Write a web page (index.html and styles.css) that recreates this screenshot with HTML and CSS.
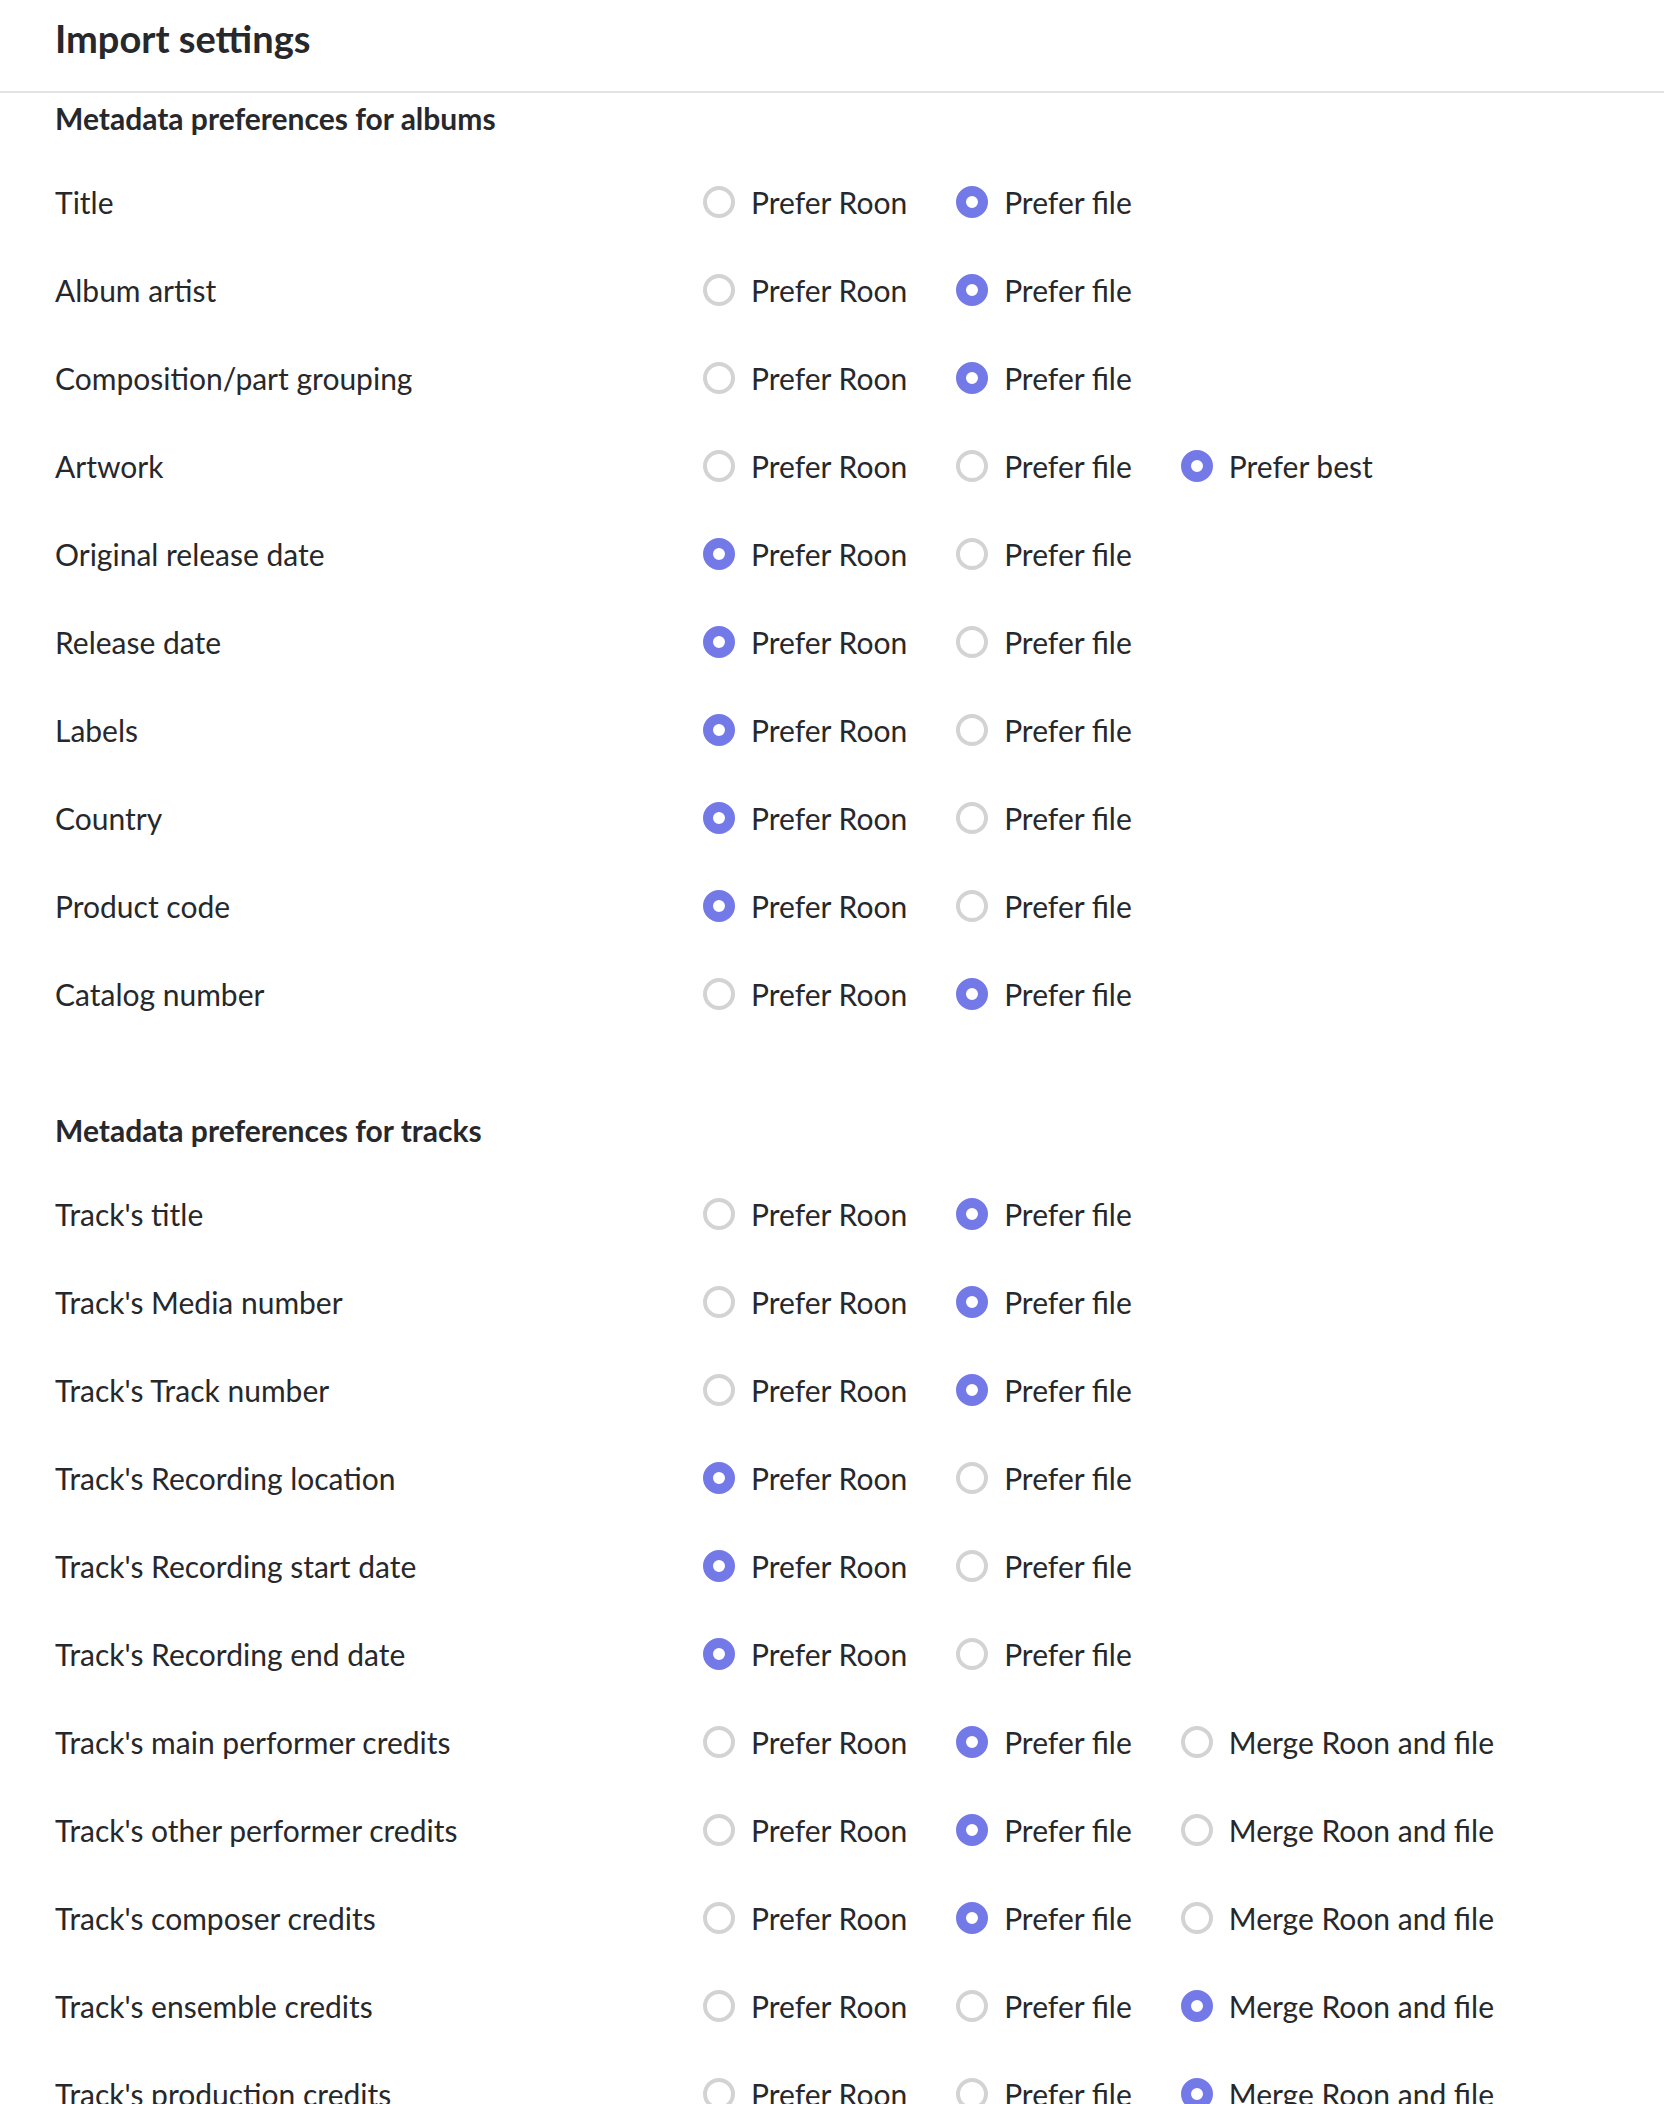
FILE: index.html
```html
<!DOCTYPE html>
<html lang="en">
<head>
  <meta charset="UTF-8">
  <title>Import settings</title>
  <link rel="stylesheet" href="styles.css">
</head>
<body>
  <header class="page-header">
    <h1>Import settings</h1>
  </header>

  <section class="prefs">
    <h2>Metadata preferences for albums</h2>

    <div class="row">
      <span class="row-label">Title</span>
      <div class="options">
        <label class="opt"><input type="radio" name="title"><span>Prefer Roon</span></label>
        <label class="opt"><input type="radio" name="title" checked><span>Prefer file</span></label>
      </div>
    </div>
    <div class="row">
      <span class="row-label">Album artist</span>
      <div class="options">
        <label class="opt"><input type="radio" name="album_artist"><span>Prefer Roon</span></label>
        <label class="opt"><input type="radio" name="album_artist" checked><span>Prefer file</span></label>
      </div>
    </div>
    <div class="row">
      <span class="row-label">Composition/part grouping</span>
      <div class="options">
        <label class="opt"><input type="radio" name="grouping"><span>Prefer Roon</span></label>
        <label class="opt"><input type="radio" name="grouping" checked><span>Prefer file</span></label>
      </div>
    </div>
    <div class="row">
      <span class="row-label">Artwork</span>
      <div class="options">
        <label class="opt"><input type="radio" name="artwork"><span>Prefer Roon</span></label>
        <label class="opt"><input type="radio" name="artwork"><span>Prefer file</span></label>
        <label class="opt"><input type="radio" name="artwork" checked><span>Prefer best</span></label>
      </div>
    </div>
    <div class="row">
      <span class="row-label">Original release date</span>
      <div class="options">
        <label class="opt"><input type="radio" name="orig_date" checked><span>Prefer Roon</span></label>
        <label class="opt"><input type="radio" name="orig_date"><span>Prefer file</span></label>
      </div>
    </div>
    <div class="row">
      <span class="row-label">Release date</span>
      <div class="options">
        <label class="opt"><input type="radio" name="release_date" checked><span>Prefer Roon</span></label>
        <label class="opt"><input type="radio" name="release_date"><span>Prefer file</span></label>
      </div>
    </div>
    <div class="row">
      <span class="row-label">Labels</span>
      <div class="options">
        <label class="opt"><input type="radio" name="labels" checked><span>Prefer Roon</span></label>
        <label class="opt"><input type="radio" name="labels"><span>Prefer file</span></label>
      </div>
    </div>
    <div class="row">
      <span class="row-label">Country</span>
      <div class="options">
        <label class="opt"><input type="radio" name="country" checked><span>Prefer Roon</span></label>
        <label class="opt"><input type="radio" name="country"><span>Prefer file</span></label>
      </div>
    </div>
    <div class="row">
      <span class="row-label">Product code</span>
      <div class="options">
        <label class="opt"><input type="radio" name="product_code" checked><span>Prefer Roon</span></label>
        <label class="opt"><input type="radio" name="product_code"><span>Prefer file</span></label>
      </div>
    </div>
    <div class="row">
      <span class="row-label">Catalog number</span>
      <div class="options">
        <label class="opt"><input type="radio" name="catalog"><span>Prefer Roon</span></label>
        <label class="opt"><input type="radio" name="catalog" checked><span>Prefer file</span></label>
      </div>
    </div>
  </section>

  <section class="prefs">
    <h2>Metadata preferences for tracks</h2>

    <div class="row">
      <span class="row-label">Track's title</span>
      <div class="options">
        <label class="opt"><input type="radio" name="t_title"><span>Prefer Roon</span></label>
        <label class="opt"><input type="radio" name="t_title" checked><span>Prefer file</span></label>
      </div>
    </div>
    <div class="row">
      <span class="row-label">Track's Media number</span>
      <div class="options">
        <label class="opt"><input type="radio" name="t_media"><span>Prefer Roon</span></label>
        <label class="opt"><input type="radio" name="t_media" checked><span>Prefer file</span></label>
      </div>
    </div>
    <div class="row">
      <span class="row-label">Track's Track number</span>
      <div class="options">
        <label class="opt"><input type="radio" name="t_number"><span>Prefer Roon</span></label>
        <label class="opt"><input type="radio" name="t_number" checked><span>Prefer file</span></label>
      </div>
    </div>
    <div class="row">
      <span class="row-label">Track's Recording location</span>
      <div class="options">
        <label class="opt"><input type="radio" name="t_location" checked><span>Prefer Roon</span></label>
        <label class="opt"><input type="radio" name="t_location"><span>Prefer file</span></label>
      </div>
    </div>
    <div class="row">
      <span class="row-label">Track's Recording start date</span>
      <div class="options">
        <label class="opt"><input type="radio" name="t_start" checked><span>Prefer Roon</span></label>
        <label class="opt"><input type="radio" name="t_start"><span>Prefer file</span></label>
      </div>
    </div>
    <div class="row">
      <span class="row-label">Track's Recording end date</span>
      <div class="options">
        <label class="opt"><input type="radio" name="t_end" checked><span>Prefer Roon</span></label>
        <label class="opt"><input type="radio" name="t_end"><span>Prefer file</span></label>
      </div>
    </div>
    <div class="row">
      <span class="row-label">Track's main performer credits</span>
      <div class="options">
        <label class="opt"><input type="radio" name="t_main"><span>Prefer Roon</span></label>
        <label class="opt"><input type="radio" name="t_main" checked><span>Prefer file</span></label>
        <label class="opt"><input type="radio" name="t_main"><span>Merge Roon and file</span></label>
      </div>
    </div>
    <div class="row">
      <span class="row-label">Track's other performer credits</span>
      <div class="options">
        <label class="opt"><input type="radio" name="t_other"><span>Prefer Roon</span></label>
        <label class="opt"><input type="radio" name="t_other" checked><span>Prefer file</span></label>
        <label class="opt"><input type="radio" name="t_other"><span>Merge Roon and file</span></label>
      </div>
    </div>
    <div class="row">
      <span class="row-label">Track's composer credits</span>
      <div class="options">
        <label class="opt"><input type="radio" name="t_composer"><span>Prefer Roon</span></label>
        <label class="opt"><input type="radio" name="t_composer" checked><span>Prefer file</span></label>
        <label class="opt"><input type="radio" name="t_composer"><span>Merge Roon and file</span></label>
      </div>
    </div>
    <div class="row">
      <span class="row-label">Track's ensemble credits</span>
      <div class="options">
        <label class="opt"><input type="radio" name="t_ensemble"><span>Prefer Roon</span></label>
        <label class="opt"><input type="radio" name="t_ensemble"><span>Prefer file</span></label>
        <label class="opt"><input type="radio" name="t_ensemble" checked><span>Merge Roon and file</span></label>
      </div>
    </div>
    <div class="row">
      <span class="row-label">Track's production credits</span>
      <div class="options">
        <label class="opt"><input type="radio" name="t_production"><span>Prefer Roon</span></label>
        <label class="opt"><input type="radio" name="t_production"><span>Prefer file</span></label>
        <label class="opt"><input type="radio" name="t_production" checked><span>Merge Roon and file</span></label>
      </div>
    </div>
  </section>
</body>
</html>
```

FILE: styles.css
```css
body {
  margin: 0;
  font-family: 'Lato', 'Noto Sans', sans-serif;
  color: #27282c;
  background: #ffffff;
}
.page-header {
  height: 76px;
  padding: 15px 55px 0;
  border-bottom: 2px solid #e4e4e4;
}
.page-header h1 {
  margin: 0;
  font-size: 38px;
  font-weight: 700;
}
.prefs {
  padding: 7px 55px 0;
}
.prefs + .prefs {
  margin-top: 67px;
}
.prefs h2 {
  margin: 0 0 22px;
  font-size: 30px;
  line-height: 36px;
  font-weight: 700;
}
.row {
  display: grid;
  grid-template-columns: 648px auto;
  align-items: center;
  height: 88px;
  font-size: 30px;
}
.options {
  display: flex;
  align-items: center;
  gap: 49px;
}
.opt {
  display: flex;
  align-items: center;
  gap: 16px;
  cursor: pointer;
}
.opt input {
  appearance: none;
  -webkit-appearance: none;
  margin: 0;
  width: 32px;
  height: 32px;
  border: 4px solid #d3d3d3;
  border-radius: 50%;
  background: #fff;
}
.opt input:checked {
  border: 10px solid #7479e8;
}
```
